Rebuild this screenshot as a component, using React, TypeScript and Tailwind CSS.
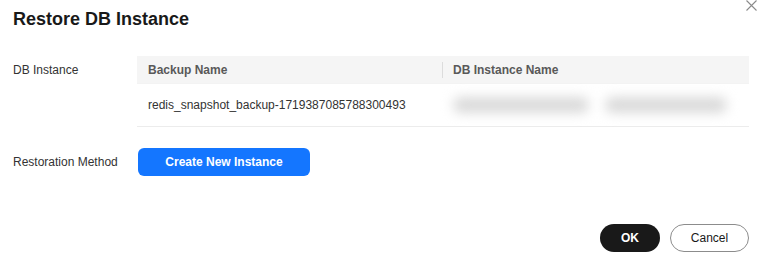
export default function App() {
  return (
    <div className="relative h-[268px] w-[766px] overflow-hidden bg-white font-['Liberation_Sans',Arial,sans-serif] text-[12px] text-[#252b3a]">
      <h1 className="pl-[13px] pt-[7px] text-[18px] font-bold leading-[24px] text-[#191919]">
        Restore DB Instance
      </h1>
      <button className="absolute right-[9px] top-0 text-[#8a8a8a]" aria-label="Close">
        <svg width="11" height="11" viewBox="0 0 11 11" fill="none" stroke="currentColor" strokeWidth="1.1">
          <path d="M0.5 0.5 10.5 10.5M10.5 0.5 0.5 10.5" />
        </svg>
      </button>

      <div className="mt-[25px] flex">
        <div className="flex h-[27px] w-[137px] items-center pl-[13px] text-[#333]">DB Instance</div>
        <div className="w-[612px]">
          <div className="flex h-[27px] items-center bg-[#f5f5f5] font-bold text-[#595959]">
            <div className="w-[305px] pl-[11px]">Backup Name</div>
            <div className="h-[16px] w-px bg-[#dcdcdc]" />
            <div className="pl-[10px]">DB Instance Name</div>
          </div>
          <div className="flex h-[44px] items-center border-y border-[#ececec] border-t-[#f3f3f3] text-[#333]">
            <div className="w-[306px] pl-[11px]">redis_snapshot_backup-1719387085788300493</div>
            <div className="flex items-center gap-[16px] pl-[10px] blur-[6px]">
              <div className="h-[16px] w-[136px] rounded-full bg-[#dadada]" />
              <div className="h-[16px] w-[122px] rounded-full bg-[#dadada]" />
            </div>
          </div>
        </div>
      </div>

      <div className="mt-[21px] flex items-center">
        <div className="w-[138px] pl-[13px] text-[#333]">Restoration Method</div>
        <button className="h-[28px] w-[172px] rounded-[6px] bg-[#1476ff] text-[12px] font-bold text-white">
          Create New Instance
        </button>
      </div>

      <div className="mt-[48px] flex justify-end gap-[10px] pr-[17px]">
        <button className="h-[28px] w-[60px] rounded-full bg-[#191919] text-[12px] font-bold text-white">OK</button>
        <button className="h-[28px] w-[79px] rounded-full border border-[#8c8c8c] text-[12px] text-[#191919]">
          Cancel
        </button>
      </div>
    </div>
  );
}
